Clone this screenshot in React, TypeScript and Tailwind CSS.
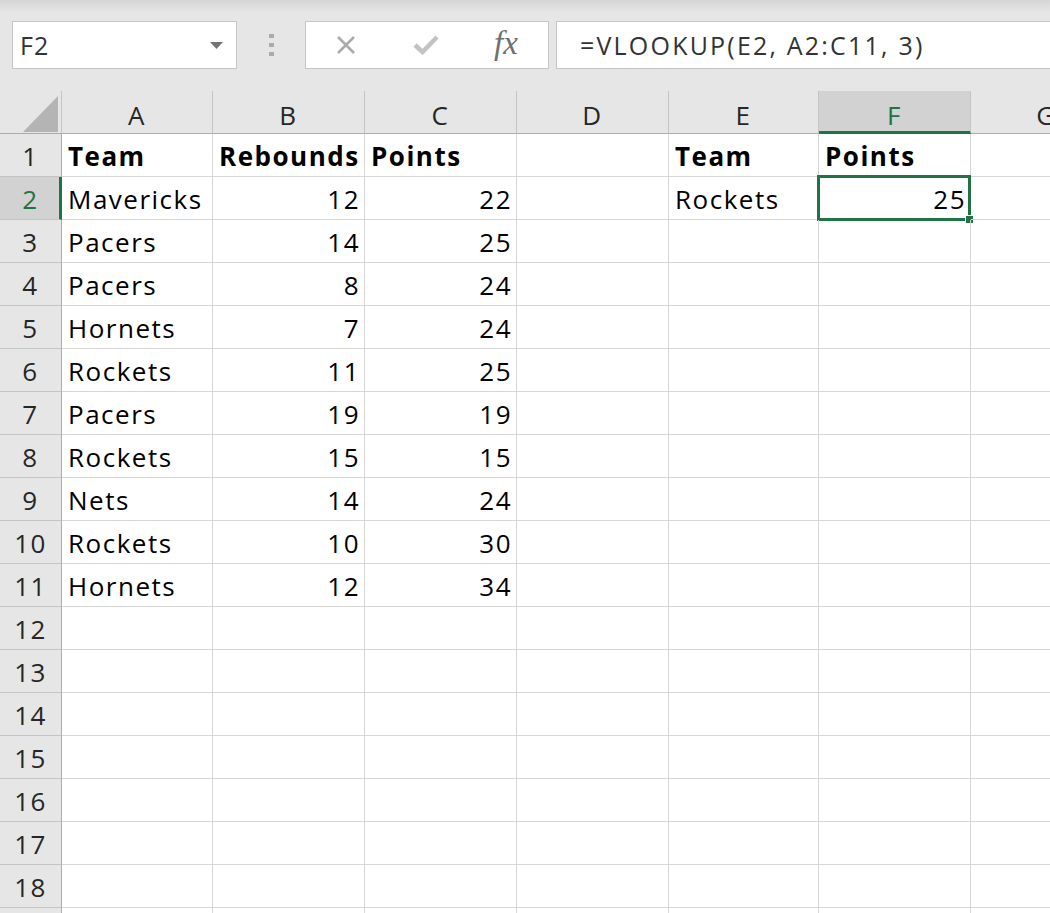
import React from "react"

type Cell = { v?: string; bold?: boolean; num?: boolean }

const data: Cell[][] = [
  [{ v: "Team", bold: true }, { v: "Rebounds", bold: true }, { v: "Points", bold: true }, {}, { v: "Team", bold: true }, { v: "Points", bold: true }],
  [{ v: "Mavericks" }, { v: "12", num: true }, { v: "22", num: true }, {}, { v: "Rockets" }, { v: "25", num: true }],
  [{ v: "Pacers" }, { v: "14", num: true }, { v: "25", num: true }],
  [{ v: "Pacers" }, { v: "8", num: true }, { v: "24", num: true }],
  [{ v: "Hornets" }, { v: "7", num: true }, { v: "24", num: true }],
  [{ v: "Rockets" }, { v: "11", num: true }, { v: "25", num: true }],
  [{ v: "Pacers" }, { v: "19", num: true }, { v: "19", num: true }],
  [{ v: "Rockets" }, { v: "15", num: true }, { v: "15", num: true }],
  [{ v: "Nets" }, { v: "14", num: true }, { v: "24", num: true }],
  [{ v: "Rockets" }, { v: "10", num: true }, { v: "30", num: true }],
  [{ v: "Hornets" }, { v: "12", num: true }, { v: "34", num: true }],
]

const columns = ["A", "B", "C", "D", "E", "F", "G"]
const rowCount = 19

function FormulaBar() {
  return (
    <div className="h-[91px] bg-gradient-to-b from-[#d6d6d6] via-[#e6e6e6] via-[14%] to-[#e6e6e6] flex items-start pt-[21px] pl-[12px] font-['Open_Sans',sans-serif]">
      {/* name box */}
      <div className="w-[225px] h-[48px] shrink-0 bg-white border border-[#c6c6c6] flex items-center justify-between pl-[7px] pr-[13px]">
        <span className="text-[25px] tracking-[1px] text-[#333] leading-none">F2</span>
        <svg width="13" height="7" viewBox="0 0 13 7">
          <polygon points="0,0 13,0 6.5,7" fill="#737373" />
        </svg>
      </div>

      {/* grip */}
      <div className="w-[68px] h-[48px] shrink-0 flex flex-col items-center justify-center gap-[5px]">
        <div className="w-[5px] h-[4px] bg-[#ababab]" />
        <div className="w-[5px] h-[4px] bg-[#ababab]" />
        <div className="w-[5px] h-[4px] bg-[#ababab]" />
      </div>

      {/* cancel / enter / fx */}
      <div className="w-[244px] h-[48px] shrink-0 bg-white border border-[#c6c6c6] flex items-center">
        <div className="w-[80px] flex justify-center">
          <svg width="20" height="20" viewBox="0 0 20 20">
            <path d="M2 2 L18 18 M18 2 L2 18" stroke="#ababab" strokeWidth="2.6" />
          </svg>
        </div>
        <div className="w-[80px] flex justify-center">
          <svg width="26" height="20" viewBox="0 0 26 20">
            <path d="M2 10 L9.5 17 L24 2" stroke="#c3c3c3" strokeWidth="4.5" fill="none" />
          </svg>
        </div>
        <div className="w-[80px] flex justify-center">
          <span className="font-['Liberation_Serif',serif] italic text-[33px] text-[#6f6f6f] leading-none -mt-[4px]">fx</span>
        </div>
      </div>

      {/* formula */}
      <div className="ml-[7px] w-[520px] h-[48px] shrink-0 bg-white border border-[#c6c6c6] flex items-center pl-[23px]">
        <span className="text-[25px] tracking-[2.2px] text-[#333] leading-none">=VLOOKUP(E2, A2:C11, 3)</span>
      </div>
    </div>
  )
}

function Sheet() {
  return (
    <div className="grid grid-cols-[62px_151px_152px_152px_152px_150px_152px_152px] font-['Open_Sans',sans-serif] text-[26px] tracking-[1.5px] text-black">
      {/* corner */}
      <div className="h-[43px] bg-[#e6e6e6] border-r border-b border-r-[#c4c4c4] border-b-[#ababab] flex items-end justify-end pr-[3px] pb-[1px]">
        <svg width="35" height="36" viewBox="0 0 35 36">
          <polygon points="35,0 35,36 0,36" fill="#b4b4b4" />
        </svg>
      </div>
      {columns.map((c) =>
        c === "F" ? (
          <div
            key={c}
            className="h-[43px] bg-[#d2d2d2] border-r border-r-[#c4c4c4] border-b-[3px] border-b-[#217346] flex items-end justify-center pb-[3px] text-[#217346] leading-none"
          >
            {c}
          </div>
        ) : (
          <div
            key={c}
            className="h-[43px] bg-[#e6e6e6] border-r border-b border-r-[#c4c4c4] border-b-[#ababab] flex items-end justify-center pb-[5px] text-[#262626] leading-none"
          >
            {c}
          </div>
        )
      )}

      {Array.from({ length: rowCount }).map((_, r) => {
        const row = data[r] || []
        const selectedRow = r === 1
        return (
          <React.Fragment key={r}>
            <div
              className={
                selectedRow
                  ? "h-[43px] bg-[#d2d2d2] border-b border-b-[#c4c4c4] border-r-[3px] border-r-[#217346] flex items-end justify-center pb-[7px] pl-[2px] text-[#217346] leading-none"
                  : "h-[43px] bg-[#e6e6e6] border-b border-b-[#c4c4c4] border-r border-r-[#ababab] flex items-end justify-center pb-[7px] text-[#262626] leading-none"
              }
            >
              {r < 18 ? r + 1 : ""}
            </div>
            {columns.map((c, ci) => {
              const cell = row[ci] || {}
              const selected = selectedRow && c === "F"
              return (
                <div
                  key={c}
                  className={
                    "relative h-[43px] border-r border-b border-[#d6d6d6] flex items-end pb-[7px] leading-none whitespace-nowrap " +
                    (cell.num ? "justify-end pl-[6px] pr-[4px] " : "justify-start px-[6px] ") +
                    (cell.bold ? "font-bold" : "")
                  }
                >
                  {cell.v}
                  {selected && (
                    <div className="absolute -left-[2px] -top-[2px] -right-[1px] -bottom-[2px] border-[3px] border-[#217346]">
                      <div className="absolute -right-[6px] -bottom-[6px] w-[9px] h-[9px] bg-[#217346] border border-white" />
                    </div>
                  )}
                </div>
              )
            })}
          </React.Fragment>
        )
      })}
    </div>
  )
}

export default function App() {
  return (
    <div className="w-[1050px] h-[913px] overflow-hidden bg-white">
      <FormulaBar />
      <Sheet />
    </div>
  )
}
